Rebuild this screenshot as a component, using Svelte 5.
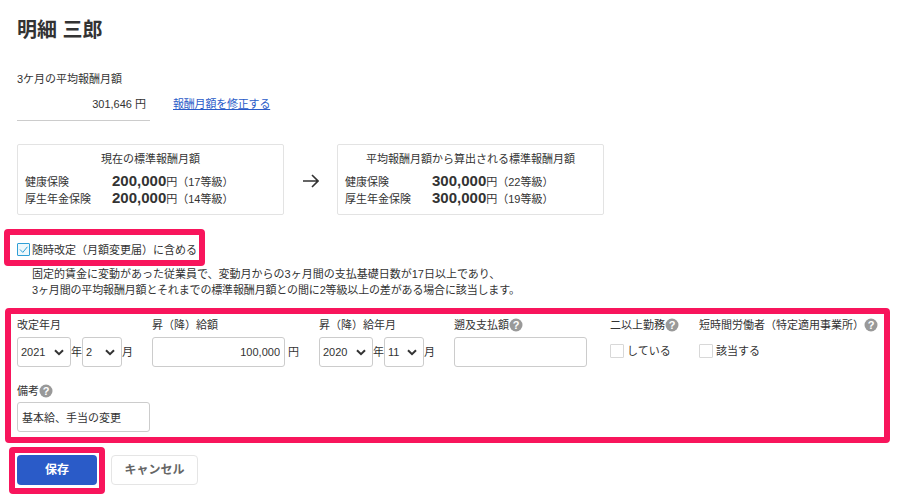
<script>
	const current = [
		{ name: '健康保険', amount: '200,000', grade: '17' },
		{ name: '厚生年金保険', amount: '200,000', grade: '14' }
	];
	const next = [
		{ name: '健康保険', amount: '300,000', grade: '22' },
		{ name: '厚生年金保険', amount: '300,000', grade: '19' }
	];
	const years = ['2019', '2020', '2021'];
	const months = Array.from({ length: 12 }, (_, i) => String(i + 1));
</script>

{#snippet help()}
	<svg class="help" viewBox="0 0 14 14" width="14" height="14" aria-hidden="true">
		<circle cx="7" cy="7" r="6.5" fill="#999"></circle>
		<text x="7" y="11" text-anchor="middle" font-size="11" font-weight="700" fill="#fff">?</text>
	</svg>
{/snippet}

{#snippet summary(title, rows)}
	<div class="summary">
		<div class="summary-title">{title}</div>
		<div class="summary-rows">
			{#each rows as row}
				<div class="summary-row">
					<span class="summary-name">{row.name}</span>
					<strong>{row.amount}</strong><span>円（{row.grade}等級）</span>
				</div>
			{/each}
		</div>
	</div>
{/snippet}

{#snippet pick(options, value, wide)}
	<span class="pick" class:wide>
		<select {value}>
			{#each options as option}
				<option value={option}>{option}</option>
			{/each}
		</select>
		<svg viewBox="0 0 10 7" width="10" height="7" aria-hidden="true">
			<path d="M1 1.2 5 5.2 9 1.2" fill="none" stroke="#333" stroke-width="2"></path>
		</svg>
	</span>
{/snippet}

<main class="page">
	<h1>明細 三郎</h1>

	<div class="avg-label">3ケ月の平均報酬月額</div>
	<div class="avg-row">
		<div class="avg-value">301,646 円</div>
		<a href="#edit">報酬月額を修正する</a>
	</div>

	<section class="compare">
		{@render summary('現在の標準報酬月額', current)}
		<div class="arrow">
			<svg viewBox="0 0 16 14" width="16" height="14" aria-hidden="true">
				<path d="M0 7H15M9 1l6 6-6 6" fill="none" stroke="#333" stroke-width="1.6"></path>
			</svg>
		</div>
		{@render summary('平均報酬月額から算出される標準報酬月額', next)}
	</section>

	<div class="mark mark-check">
		<label class="check-line">
			<span class="box checked">
				<svg viewBox="0 0 13 13" width="13" height="13" aria-hidden="true">
					<path d="M3 6.5 5.8 9.4 10.4 3.8" fill="none" stroke="#2f9fd6" stroke-width="1"></path>
				</svg>
			</span>
			随時改定（月額変更届）に含める
		</label>
	</div>
	<p class="note">
		固定的賃金に変動があった従業員で、変動月からの3ヶ月間の支払基礎日数が17日以上であり、<br />
		<span class="tight">3ヶ月間の平均報酬月額とそれまでの標準報酬月額との間に2等級以上の差がある場合に該当します。</span>
	</p>

	<form class="mark mark-form">
		<div class="fields">
			<div class="field col-date">
				<div class="label">改定年月</div>
				<div class="controls">
					{@render pick(years, '2021', true)}<span class="unit">年</span>
					{@render pick(months, '2', false)}<span class="unit">月</span>
				</div>
			</div>
			<div class="field col-raise">
				<div class="label">昇（降）給額</div>
				<div class="controls">
					<input class="text amount" value="100,000" /><span class="unit yen">円</span>
				</div>
			</div>
			<div class="field col-date">
				<div class="label">昇（降）給年月</div>
				<div class="controls">
					{@render pick(years, '2020', true)}<span class="unit">年</span>
					{@render pick(months, '11', false)}<span class="unit">月</span>
				</div>
			</div>
			<div class="field col-back">
				<div class="label">遡及支払額{@render help()}</div>
				<div class="controls">
					<input class="text amount" />
				</div>
			</div>
			<div class="field col-multi">
				<div class="label">二以上勤務{@render help()}</div>
				<label class="check-line small"><span class="box"></span>している</label>
			</div>
			<div class="field">
				<div class="label">短時間労働者（特定適用事業所）{@render help()}</div>
				<label class="check-line small"><span class="box"></span>該当する</label>
			</div>
		</div>
		<div class="field remark">
			<div class="label">備考{@render help()}</div>
			<input class="text" value="基本給、手当の変更" />
		</div>
	</form>

	<div class="actions">
		<div class="mark mark-save">
			<button type="submit" class="save">保存</button>
		</div>
		<button type="button" class="cancel">キャンセル</button>
	</div>
</main>

<style>
	:global(body) {
		margin: 0;
		background: #fff;
	}

	.page {
		width: 918px;
		height: 500px;
		box-sizing: border-box;
		padding-left: 17px;
		overflow: hidden;
		color: #333;
		font-family: 'Liberation Sans', 'Noto Sans CJK JP', sans-serif;
		font-size: 11px;
		line-height: 16px;
	}

	h1 {
		margin: 0;
		padding-top: 18px;
		font-size: 20px;
		line-height: 24px;
		font-weight: 700;
	}

	.avg-label {
		margin-top: 29px;
	}

	.avg-row {
		display: flex;
		margin-top: 9px;
	}

	.avg-value {
		width: 133px;
		box-sizing: border-box;
		padding: 0 4px 8px 0;
		border-bottom: 1px solid #ccc;
		text-align: right;
	}

	a {
		margin-left: 23px;
		color: #2a5bc8;
		letter-spacing: -0.2px;
	}

	.compare {
		display: flex;
		margin-top: 23px;
	}

	.summary {
		width: 267px;
		height: 71px;
		box-sizing: border-box;
		padding: 6px 7px 0;
		border: 1px solid #e3e3e3;
		border-radius: 2px;
	}

	.summary-title {
		text-align: center;
	}

	.summary-rows {
		margin-top: 6px;
	}

	.summary-row {
		display: flex;
		align-items: baseline;
		height: 17px;
		line-height: 17px;
	}

	.summary-name {
		width: 87px;
	}

	.summary-row strong {
		font-size: 15px;
		line-height: 15px;
	}

	.arrow {
		display: flex;
		align-items: center;
		justify-content: center;
		width: 53px;
		padding-top: 2px;
		box-sizing: border-box;
	}

	.mark {
		border: 6px solid #f8155c;
		border-radius: 4px;
		box-sizing: border-box;
	}

	.mark-check {
		width: 201px;
		height: 37px;
		margin: 14px 0 0 -13px;
		padding: 8px 0 0 7px;
	}

	.check-line {
		display: flex;
		align-items: center;
		gap: 2px;
		height: 13px;
		white-space: nowrap;
	}

	.box {
		display: block;
		flex: none;
		width: 13px;
		height: 13px;
		box-sizing: border-box;
		border: 1px solid #d8d8d8;
		border-radius: 1px;
	}

	.box.checked {
		border-color: #2f9fd6;
		background: #eef8fc;
	}

	.box svg {
		display: block;
		margin: -1px;
	}

	.note {
		margin: 0;
		padding-left: 15px;
		height: 32px;
		white-space: nowrap;
	}

	.tight {
		letter-spacing: -0.15px;
	}

	.mark-form {
		width: 885px;
		height: 135px;
		margin: 10px 0 0 -12px;
		padding: 3px 0 0 6px;
	}

	.fields {
		display: flex;
	}

	.col-date {
		width: 135px;
	}

	.col-raise {
		width: 167px;
	}

	.col-back {
		width: 156px;
	}

	.col-multi {
		width: 89px;
	}

	.label {
		display: flex;
		align-items: center;
		height: 16px;
		white-space: nowrap;
	}

	.help {
		flex: none;
		font-family: 'Liberation Sans', sans-serif;
	}

	.controls {
		display: flex;
		align-items: center;
		margin-top: 4px;
	}

	.pick {
		position: relative;
		display: block;
		width: 40px;
		height: 30px;
	}

	.pick.wide {
		width: 54px;
	}

	.pick svg {
		position: absolute;
		top: 12px;
		right: 7px;
		pointer-events: none;
	}

	select,
	.text {
		display: block;
		height: 30px;
		box-sizing: border-box;
		border: 1px solid #ccc;
		border-radius: 3px;
		background: #fff;
		color: #333;
		font: inherit;
		outline: none;
	}

	select {
		width: 100%;
		padding: 0 0 0 3px;
		appearance: none;
	}

	.text {
		width: 133px;
		padding: 0 4px;
	}

	.amount {
		text-align: right;
	}

	.unit {
		width: 11px;
		text-align: center;
		flex: none;
	}

	.yen {
		margin-left: 3px;
	}

	.small {
		margin-top: 11px;
		gap: 3px;
		height: 14px;
	}

	.small .box {
		width: 14px;
		height: 14px;
	}

	.remark {
		margin-top: 16px;
	}

	.remark .text {
		margin-top: 3px;
	}

	.actions {
		display: flex;
		align-items: flex-start;
		margin: 4px 0 0 -8px;
	}

	.mark-save {
		width: 96px;
		height: 47px;
		padding: 2px;
	}

	button {
		height: 30px;
		border-radius: 4px;
		font: inherit;
		font-size: 12px;
		font-weight: 700;
	}

	.save {
		display: block;
		width: 80px;
		border: 0;
		background: #2a5bc8;
		color: #fff;
	}

	.cancel {
		width: 87px;
		margin: 8px 0 0 6px;
		border: 1px solid #e5e5e5;
		background: #fff;
		color: #666;
	}
</style>
